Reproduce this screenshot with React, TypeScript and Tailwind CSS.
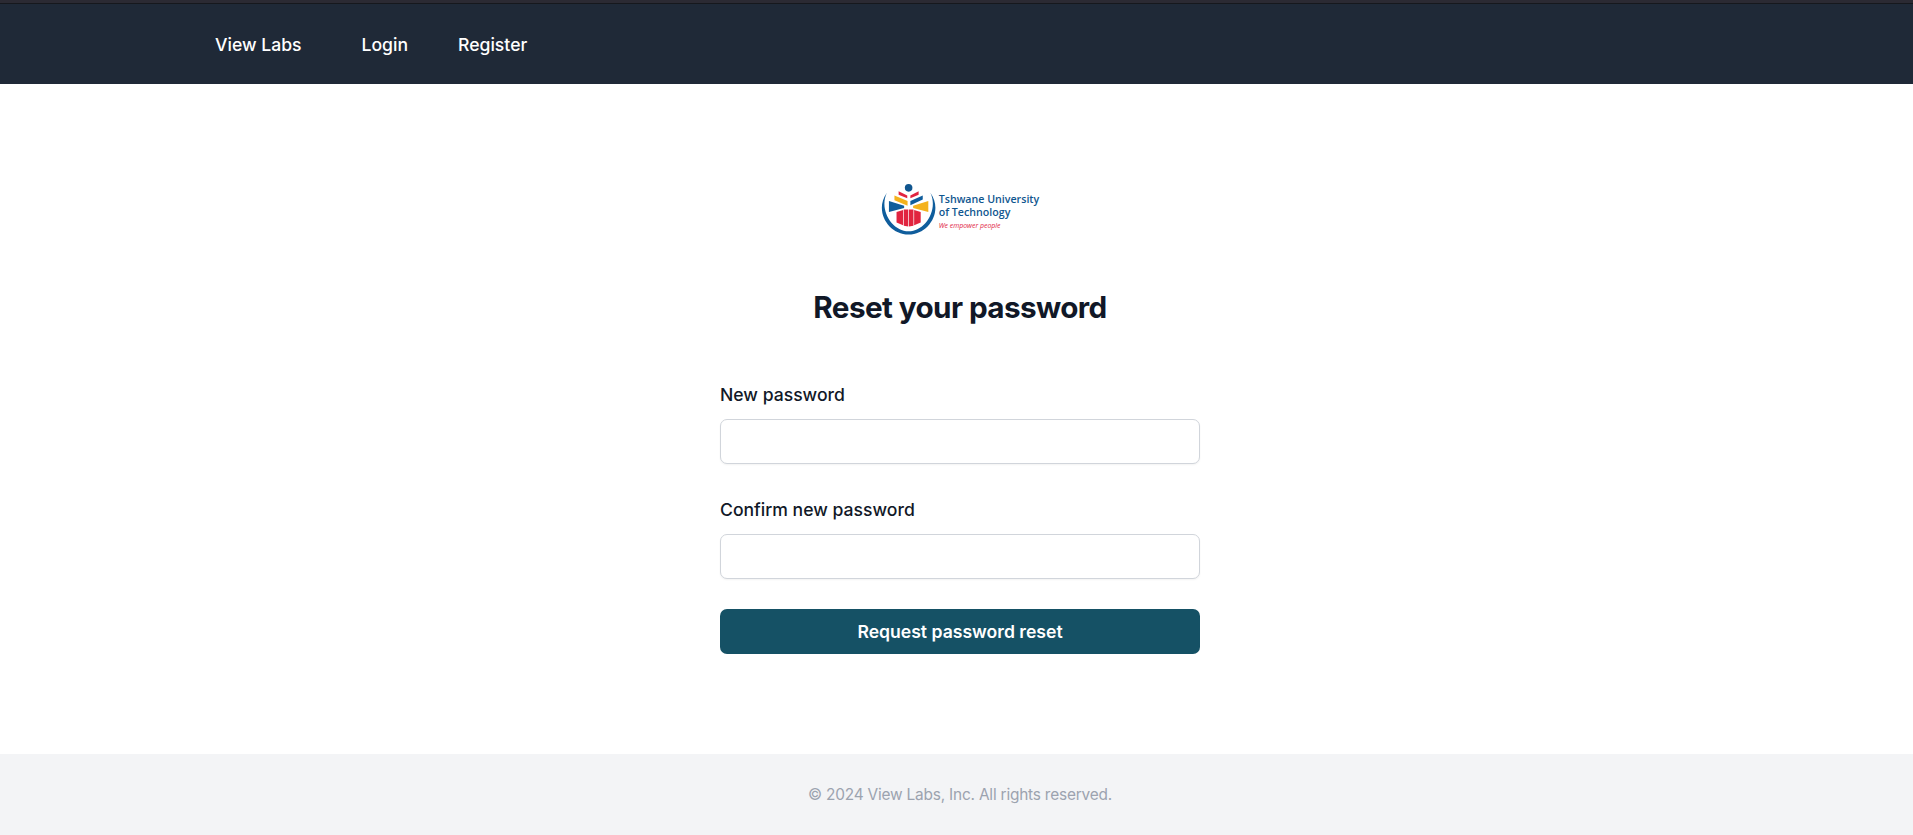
const navLinks = [
  { label: 'Login', className: 'ml-[60px]' },
  { label: 'Register', className: 'ml-[50px]' },
];

function TutLogo() {
  return (
    <div className="flex items-center">
      <svg width="58" height="58" viewBox="5 5 168 168" className="mt-[2px] shrink-0">
        <path d="M22 36 C-16 88 26 157 85 157 C144 157 186 88 148 36 C172 86 132 148 85 148 C38 148 -2 86 22 36 Z" fill="#0f5d9c" />
        <circle cx="85" cy="22" r="11" fill="#10568f" />
        <polygon points="56,32 81,44 81,52 56,42" fill="#e1243f" />
        <polygon points="114,32 90,44 90,52 114,42" fill="#e1243f" />
        <polygon points="44,44 82,60 82,74 44,58" fill="#f4b21d" />
        <polygon points="126,44 90,60 90,72 126,56" fill="#0f5d9c" />
        <polygon points="28,60 72,74 72,80 28,92" fill="#0f5d9c" />
        <polygon points="142,60 98,74 98,80 142,92" fill="#f4b21d" />
        <polygon points="50,92 69,86 69,130 50,122" fill="#e1243f" />
        <polygon points="71,85 84,85 84,134 71,132" fill="#e1243f" />
        <polygon points="86,85 99,85 99,132 86,134" fill="#e1243f" />
        <polygon points="101,86 120,92 120,122 101,130" fill="#e1243f" />
      </svg>
      <div className="flex flex-col pt-[5px] font-['Open_Sans',sans-serif] text-[10.65px] leading-[13px] font-semibold whitespace-nowrap text-[#10568f]">
        <span>Tshwane University</span>
        <span>of Technology</span>
        <span className="text-[6.9px] leading-[14px] font-normal text-[#e1243f] italic">We empower people</span>
      </div>
    </div>
  );
}

function Field({ label }: { label: string }) {
  return (
    <div>
      <label className="block pt-px text-[17.6px] leading-[26px] font-medium text-[#111827]">{label}</label>
      <input
        type="password"
        className="mt-[11px] block h-[45px] w-full rounded-[7px] border border-[#d1d5db] bg-white shadow-[0_1px_2px_rgba(0,0,0,0.05)]"
      />
    </div>
  );
}

export default function App() {
  return (
    <div className="flex min-h-[835px] flex-col bg-white font-['Inter',sans-serif]">
      <div className="h-[4px] border-b border-[#16181d] bg-[#2b2a33]" />
      {/* Nav */}
      <nav className="flex h-[80px] items-center bg-[#1f2937] pt-[2px] pl-[215px] text-[17.6px] font-medium text-white">
        <a>View Labs</a>
        {navLinks.map((link) => (
          <a key={link.label} className={link.className}>
            {link.label}
          </a>
        ))}
      </nav>

      {/* Form */}
      <main className="flex flex-1 flex-col items-center pt-[96px] pl-[7px]">
        <TutLogo />
        <h2 className="mt-[47px] text-[29.7px] leading-[40px] font-bold tracking-[-0.6px] text-[#111827]">Reset your password</h2>
        <form className="mt-[54px] flex w-[480px] flex-col">
          <div className="flex flex-col gap-[32px]">
            <Field label="New password" />
            <Field label="Confirm new password" />
          </div>
          <button
            type="button"
            className="mt-[30px] h-[45px] rounded-[7px] bg-[#155165] pt-[2px] text-[17.6px] font-semibold text-white"
          >
            Request password reset
          </button>
        </form>
      </main>

      <footer className="flex h-[81px] items-center justify-center bg-[#f3f4f6] pt-px pl-[7px] text-[15.4px] tracking-[-0.19px] text-[#9ca3af]">
        © 2024 View Labs, Inc. All rights reserved.
      </footer>
    </div>
  );
}
